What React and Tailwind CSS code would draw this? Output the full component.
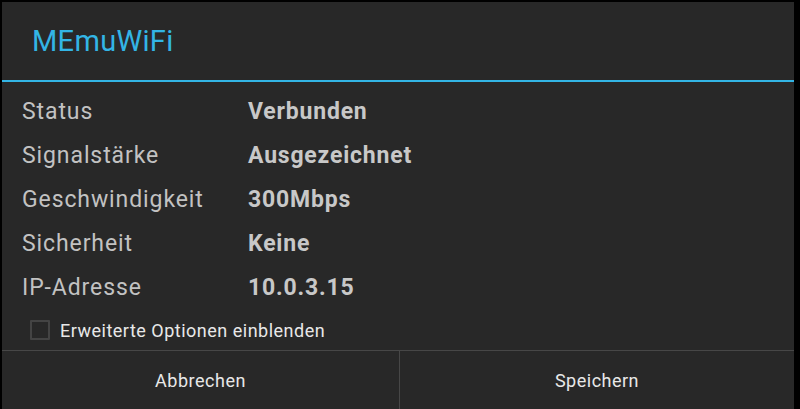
import React from 'react';

const rows = [
  ['Status', 'Verbunden'],
  ['Signalstärke', 'Ausgezeichnet'],
  ['Geschwindigkeit', '300Mbps'],
  ['Sicherheit', 'Keine'],
  ['IP-Adresse', '10.0.3.15'],
];

const App = () => {
  return (
    <div className="w-[800px] h-[409px] bg-black pt-[2px] pl-[2px] pr-[6px] overflow-hidden" style={{ fontFamily: 'Roboto, "Noto Sans", sans-serif' }}>
      <div className="h-full bg-[#282828] flex flex-col">
        <div className="h-[78px] flex items-center pl-[30px]">
          <h1 className="text-[29px] tracking-[0.3px] text-[#33b5e5] leading-none">MEmuWiFi</h1>
        </div>
        <div className="h-[2px] bg-[#33b5e5]" />
        <div className="pt-[8px]">
          {rows.map(([label, value]) => (
            <div key={label} className="h-[44px] flex items-center pl-[20px]">
              <span className="w-[226px] text-[23px] tracking-[0.9px] text-[#c2c2c2]">{label}</span>
              <span className="text-[23px] tracking-[0.8px] font-bold text-[#c8c8c8]">{value}</span>
            </div>
          ))}
        </div>
        <div className="h-[40px] flex items-center pl-[28px] gap-[10px]">
          <div className="w-[20px] h-[20px] border-2 border-[#444444] rounded-[1px]" />
          <span className="text-[18px] tracking-[0.5px] text-[#e8e8e8]">Erweiterte Optionen einblenden</span>
        </div>
        <div className="flex-1 flex border-t border-[#474747]">
          <button className="w-[398px] text-[18px] tracking-[0.5px] text-[#e8e8e8] border-r border-[#474747]">Abbrechen</button>
          <button className="flex-1 text-[18px] tracking-[0.5px] text-[#e8e8e8]">Speichern</button>
        </div>
      </div>
    </div>
  );
};

export default App;
